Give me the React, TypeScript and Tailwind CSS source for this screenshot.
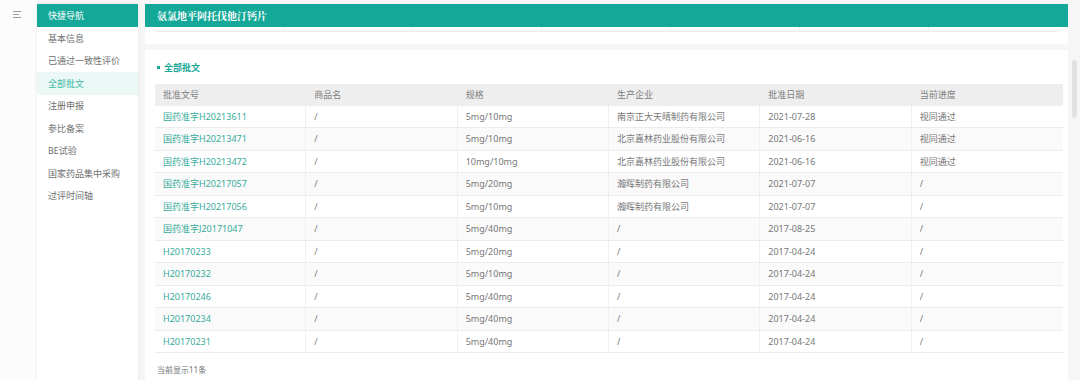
import React from 'react';

const navItems = [
  '基本信息',
  '已通过一致性评价',
  '全部批文',
  '注册申报',
  '参比备案',
  'BE试验',
  '国家药品集中采购',
  '过评时间轴',
];

const columns = ['批准文号', '商品名', '规格', '生产企业', '批准日期', '当前进度'];

const rows = [
  ['国药准字H20213611', '/', '5mg/10mg', '南京正大天晴制药有限公司', '2021-07-28', '视同通过'],
  ['国药准字H20213471', '/', '5mg/10mg', '北京嘉林药业股份有限公司', '2021-06-16', '视同通过'],
  ['国药准字H20213472', '/', '10mg/10mg', '北京嘉林药业股份有限公司', '2021-06-16', '视同通过'],
  ['国药准字H20217057', '/', '5mg/20mg', '瀚晖制药有限公司', '2021-07-07', '/'],
  ['国药准字H20217056', '/', '5mg/10mg', '瀚晖制药有限公司', '2021-07-07', '/'],
  ['国药准字J20171047', '/', '5mg/40mg', '/', '2017-08-25', '/'],
  ['H20170233', '/', '5mg/20mg', '/', '2017-04-24', '/'],
  ['H20170232', '/', '5mg/10mg', '/', '2017-04-24', '/'],
  ['H20170246', '/', '5mg/40mg', '/', '2017-04-24', '/'],
  ['H20170234', '/', '5mg/40mg', '/', '2017-04-24', '/'],
  ['H20170231', '/', '5mg/40mg', '/', '2017-04-24', '/'],
];

export default function App() {
  return (
    <div
      className="w-[1080px] h-[380px] flex overflow-hidden bg-[#f6f6f6] text-[#777]"
      style={{ fontFamily: '"Noto Sans", "Noto Sans CJK SC", sans-serif' }}
    >
      {/* Left rail with menu toggle */}
      <div className="w-[37px] shrink-0 bg-[#fcfcfc] pt-[11px] pl-[13px]">
        <svg width="8" height="7" viewBox="0 0 8 7" className="block">
          <rect x="0" y="0" width="8" height="1" fill="#999" />
          <rect x="0" y="3" width="6" height="1" fill="#999" />
          <rect x="0" y="6" width="8" height="1" fill="#999" />
        </svg>
      </div>

      {/* Sidebar */}
      <aside className="w-[101px] shrink-0 mt-[4px] bg-white shadow-[0_0_4px_rgba(0,0,0,0.08)] flex flex-col">
        <div className="h-[23px] bg-[#14a898] text-white text-[9px] flex items-center pl-[11px]">
          快捷导航
        </div>
        <nav className="flex flex-col">
          {navItems.map((item) => (
            <div
              key={item}
              className={`h-[22.5px] flex items-center pl-[11px] text-[9px] ${
                item === '全部批文' ? 'bg-[#ebf8f5] text-[#3db8a6]' : 'text-[#707070]'
              }`}
            >
              {item}
            </div>
          ))}
        </nav>
      </aside>

      {/* Main */}
      <main className="w-[923px] shrink-0 ml-[7px] mt-[4px] flex flex-col">
        <div
          className="h-[23px] bg-[#14a898] text-white text-[10px] font-bold flex items-center pl-[12px]"
          style={{ fontFamily: '"Noto Serif CJK SC", "Noto Sans CJK SC", serif' }}
        >
          氨氯地平阿托伐他汀钙片
        </div>

        {/* Remnant of previous section */}
        <div className="h-[17px] bg-white px-[10px]">
          <div className="h-[5px] grid grid-cols-7 border-b border-[#eeeeee]">
            {Array.from({ length: 7 }).map((_, i) => (
              <div key={i} className="border-r border-[#f0f0f0] last:border-r-0" />
            ))}
          </div>
        </div>

        <div className="h-[6px]" />

        {/* Card */}
        <section className="flex-1 bg-white pl-[10px] pr-[5px] pt-[11px]">
          <div className="flex items-center gap-[4px] text-[9px] font-bold text-[#19a897] pl-[2px]">
            <span className="w-[3px] h-[3px] bg-[#19a897]" />
            全部批文
          </div>

          <div className="mt-[9px] w-[908px] text-[9px]">
            <div className="grid grid-cols-6 h-[22px] bg-[#eeeeee] text-[#808080]">
              {columns.map((c) => (
                <div key={c} className="flex items-center pl-[8px]">
                  {c}
                </div>
              ))}
            </div>
            {rows.map((r, i) => (
              <div
                key={r[0]}
                className={`grid grid-cols-6 h-[22.5px] border-b border-[#ececec] ${
                  i % 2 === 1 ? 'bg-[#fafafa]' : 'bg-white'
                }`}
              >
                {r.map((cell, j) => (
                  <div
                    key={j}
                    className={`flex items-center pl-[8px] border-r border-[#f0f0f0] last:border-r-0 ${
                      j === 0 ? 'text-[#35ab9c]' : 'text-[#777]'
                    }`}
                  >
                    {cell}
                  </div>
                ))}
              </div>
            ))}
          </div>

          <div className="mt-[11px] text-[8px] text-[#707070] pl-[2px]">当前显示11条</div>
        </section>
      </main>

      {/* Scrollbar */}
      <div className="w-[12px] shrink-0 bg-[#f6f6f6] pt-[60px] flex justify-center">
        <div className="w-[5px] h-[58px] rounded-[3px] bg-[#e2e2e2]" />
      </div>
    </div>
  );
}
